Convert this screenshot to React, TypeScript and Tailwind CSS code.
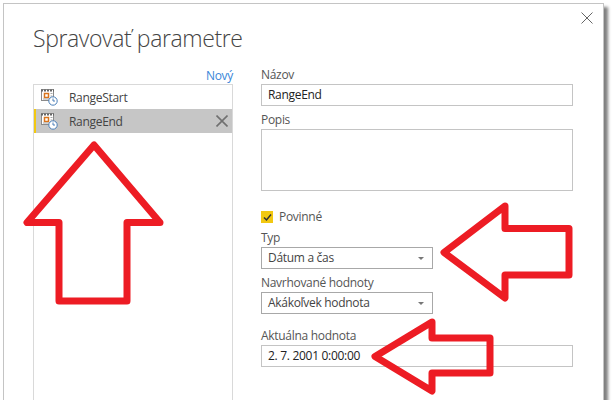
function ParamIcon() {
  return (
    <svg width="17" height="17" viewBox="0 0 17 17" className="shrink-0">
      <rect x="0.500" y="0.500" width="12" height="11" fill="#fff" stroke="#8a8a8a" />
      <path d="M0 1.500H13" stroke="#666" strokeWidth="2" strokeDasharray="2 1" />
      <rect x="3.500" y="4.500" width="4" height="4" fill="#fff" stroke="#d9741c" strokeWidth="1.500" />
      <path d="M9.500 4.500h2M9.500 7h2M2 10h6" stroke="#a8a8a8" />
      <circle cx="12" cy="12" r="4.200" fill="#fff" stroke="#4a7fb8" />
      <path d="M12 9.500V12h2" fill="none" stroke="#4a7fb8" />
    </svg>
  );
}

function Cross({ size, width, color }: { size: number; width: number; color: string }) {
  return (
    <svg width={size} height={size} viewBox="0 0 12 12" className="shrink-0">
      <path d="M0.500 0.500L11.500 11.500M11.500 0.500L0.500 11.500" fill="none" stroke={color} strokeWidth={width} />
    </svg>
  );
}

function Label({ children }: { children: string }) {
  return <div className="h-[16px] text-[12px] leading-[16px] text-[#555]">{children}</div>;
}

function TextBox({ value, className = "" }: { value: string; className?: string }) {
  return (
    <div className={`h-[22px] border border-[#c4c4c4] pl-[6px] text-[12px] leading-[20px] text-[#222] ${className}`}>
      {value}
    </div>
  );
}

function Select({ value }: { value: string }) {
  return (
    <div className="mt-[1px] flex h-[22px] w-[172px] items-center justify-between border border-[#a8a8a8] pl-[6px] pr-[8px] text-[12px] text-[#444]">
      <span>{value}</span>
      <span className="h-0 w-0 border-x-[3px] border-t-[3px] border-x-transparent border-t-[#777]" />
    </div>
  );
}

function Arrows() {
  return (
    <svg width="613" height="400" className="pointer-events-none absolute left-0 top-0">
      <g fill="none" stroke="#ed1c24" strokeWidth="7" strokeLinejoin="round">
        <path d="M94 145L27 222.500H59V301H127V222.500H160Z" />
        <path d="M505 206L444 252.500L505 298V275H569V228.500H505Z" />
        <path d="M432 322L375 356.500L432 391V373H490V338H432Z" />
      </g>
    </svg>
  );
}

export default function App() {
  return (
    <div
      className="relative h-[400px] w-[613px] overflow-hidden bg-white pl-[3px] pt-[3px] tracking-[-0.3px] text-[#444]"
      style={{ fontFamily: '"Open Sans", "Noto Sans", sans-serif' }}
    >
      <div className="relative h-[430px] w-[601px] border border-[#c4c4c4] bg-white pl-[29px] pt-[17px] shadow-[4px_4px_3px_#808080]">
        <div className="absolute right-[10px] top-[8px]">
          <Cross size={12} width={1} color="#666" />
        </div>
        <h1 className="h-[41px] text-[23px] font-light leading-[34px] tracking-[-0.4px] text-[#444]">
          Spravovať parametre
        </h1>

        <div className="flex">
          <div className="w-[200px]">
            <div className="h-[22px] text-right text-[12px] leading-[28px] text-[#3a86d8]">Nový</div>
            <div className="h-[330px] border border-[#d9d9d9] text-[12px]">
              <div className="flex h-[24px] items-center gap-[11px] pl-[7px]">
                <ParamIcon />
                <span className="pt-[1px]">RangeStart</span>
              </div>
              <div className="flex h-[24px] items-center gap-[11px] border-l-[2px] border-[#f2c811] bg-[#c6c6c6] pl-[5px]">
                <ParamIcon />
                <span className="flex-1 pt-[1px]">RangeEnd</span>
                <div className="mr-[4px]">
                  <Cross size={12} width={1.6} color="#707070" />
                </div>
              </div>
            </div>
          </div>

          <div className="ml-[28px] w-[312px] pt-[5px]">
            <Label>Názov</Label>
            <TextBox value="RangeEnd" className="mt-[1px]" />
            <div className="mt-[6px]">
              <Label>Popis</Label>
            </div>
            <div className="mt-[1px] h-[62px] border border-[#c4c4c4]" />
            <div className="mt-[20px] flex h-[12px] items-center gap-[6px] text-[12px] text-[#555]">
              <span className="flex h-[12px] w-[12px] items-center justify-center bg-[#f2c811]">
                <svg width="9" height="9" viewBox="0 0 9 9">
                  <path d="M1 4.500L3.500 7L8 1.500" fill="none" stroke="#333" strokeWidth="1.500" />
                </svg>
              </span>
              Povinné
            </div>
            <div className="mt-[7px]">
              <Label>Typ</Label>
            </div>
            <Select value="Dátum a čas" />
            <div className="mt-[6px]">
              <Label>Navrhované hodnoty</Label>
            </div>
            <Select value="Akákoľvek hodnota" />
            <div className="mt-[14px]">
              <Label>Aktuálna hodnota</Label>
            </div>
            <TextBox value="2. 7. 2001 0:00:00" className="mt-[1px]" />
          </div>
        </div>
      </div>
      <Arrows />
    </div>
  );
}
